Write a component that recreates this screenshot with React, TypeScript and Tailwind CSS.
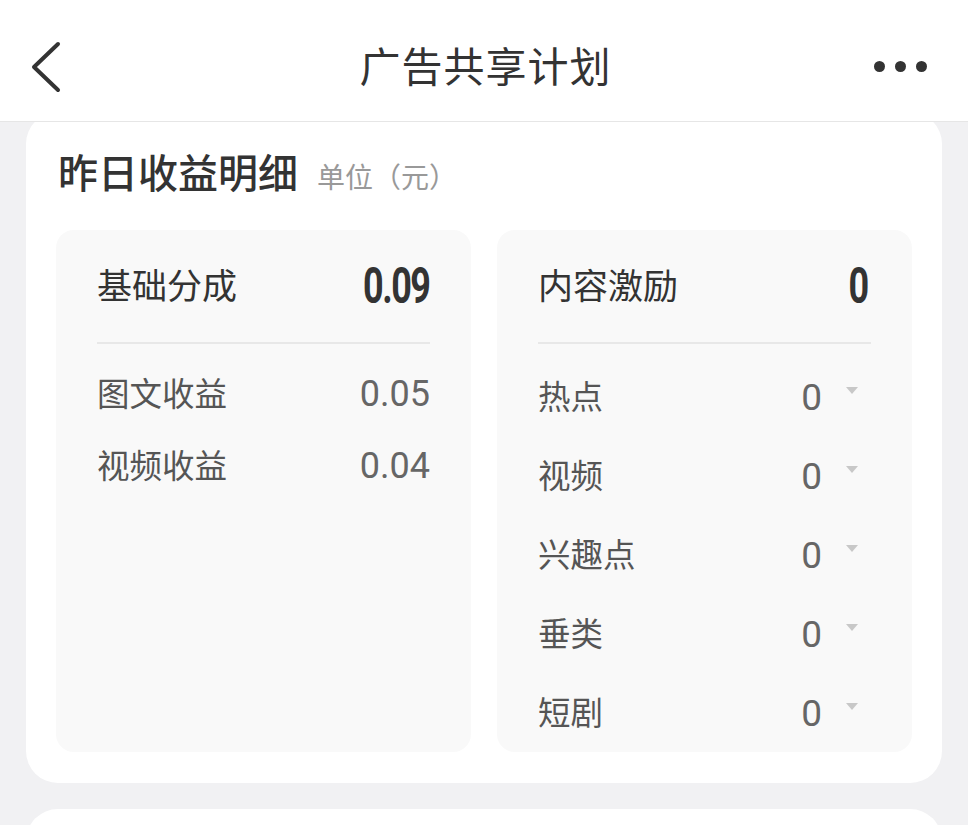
const font = { fontFamily: '"Noto Sans", "Noto Sans CJK SC", sans-serif' };
const numFont = { fontFamily: "Roboto, sans-serif" };
const boldNum = { fontFamily: '"Liberation Sans Narrow", Roboto, sans-serif' };

const incentiveRows = ["热点", "视频", "兴趣点", "垂类", "短剧"];

function Caret() {
  return (
    <svg width="14" height="9" viewBox="0 0 14 9" className="mb-[14px] ml-[23px]">
      <path d="M1 1 L13 1 L7 8 Z" fill="#c8c8c8" />
    </svg>
  );
}

export default function App() {
  return (
    <div className="w-[968px] h-[825px] overflow-hidden bg-[#f1f1f3]" style={font}>
      {/* Header */}
      <header className="relative z-10 h-[122px] bg-white border-b border-[#e6e6e6] flex items-center justify-between pl-[30px] pr-[41px]">
        <div className="w-[154px] flex items-center">
          <svg width="32" height="52" viewBox="0 0 32 52" className="mt-[13px]">
            <path d="M28 3 L4 26 L28 49" fill="none" stroke="#333" strokeWidth="4" strokeLinecap="round" strokeLinejoin="round" />
          </svg>
        </div>
        <h1 className="text-[41px] text-[#333] tracking-[1px] mt-[12px]">广告共享计划</h1>
        <div className="w-[140px] flex items-center justify-end gap-[10px] mt-[12px]">
          <span className="w-[11px] h-[11px] rounded-full bg-[#333]" />
          <span className="w-[11px] h-[11px] rounded-full bg-[#333]" />
          <span className="w-[11px] h-[11px] rounded-full bg-[#333]" />
        </div>
      </header>

      <div className="px-[26px] -mt-[10px]">
        {/* Earnings card */}
        <section className="bg-white rounded-[32px] px-[30px] pt-[31px] pb-[31px]">
          <div className="flex items-baseline pl-[2px] h-[60px]">
            <h2 className="text-[40px] font-medium text-[#333]">昨日收益明细</h2>
            <span className="ml-[19px] text-[28px] text-[#999]">单位（元）</span>
          </div>

          <div className="mt-[27px] grid grid-cols-2 gap-[26px]">
            {/* Left panel */}
            <div className="h-[522px] bg-[#f9f9f9] rounded-[18px] px-[41px]">
              <div className="h-[114px] flex items-center justify-between border-b-2 border-[#e8e8e8]">
                <span className="text-[35px] text-[#333]">基础分成</span>
                <span className="text-[50px] font-bold text-[#333] tracking-[-2px] scale-x-[0.72] origin-right" style={boldNum}>
                  0.09
                </span>
              </div>
              <div className="pt-[14px]">
                <div className="h-[72px] flex items-center justify-between">
                  <span className="text-[32.5px] text-[#555]">图文收益</span>
                  <span className="text-[36px] text-[#666]" style={numFont}>0.05</span>
                </div>
                <div className="h-[72px] flex items-center justify-between">
                  <span className="text-[32.5px] text-[#555]">视频收益</span>
                  <span className="text-[36px] text-[#666]" style={numFont}>0.04</span>
                </div>
              </div>
            </div>

            {/* Right panel */}
            <div className="h-[522px] bg-[#f9f9f9] rounded-[18px] px-[41px]">
              <div className="h-[114px] flex items-center justify-between border-b-2 border-[#e8e8e8]">
                <span className="text-[35px] text-[#333]">内容激励</span>
                <span className="text-[50px] font-bold text-[#333] scale-x-[0.72] origin-right pr-[2px]" style={boldNum}>
                  0
                </span>
              </div>
              <div className="pt-[14px]">
                {incentiveRows.map((label) => (
                  <div key={label} className="h-[79px] flex items-center justify-between">
                    <span className="text-[32.5px] text-[#555]">{label}</span>
                    <div className="flex items-center pr-[12px]">
                      <span className="text-[37px] text-[#666]" style={numFont}>0</span>
                      <Caret />
                    </div>
                  </div>
                ))}
              </div>
            </div>
          </div>
        </section>

        {/* Next card (cut off) */}
        <section className="mt-[26px] h-[80px] bg-white rounded-t-[32px]" />
      </div>
    </div>
  );
}
